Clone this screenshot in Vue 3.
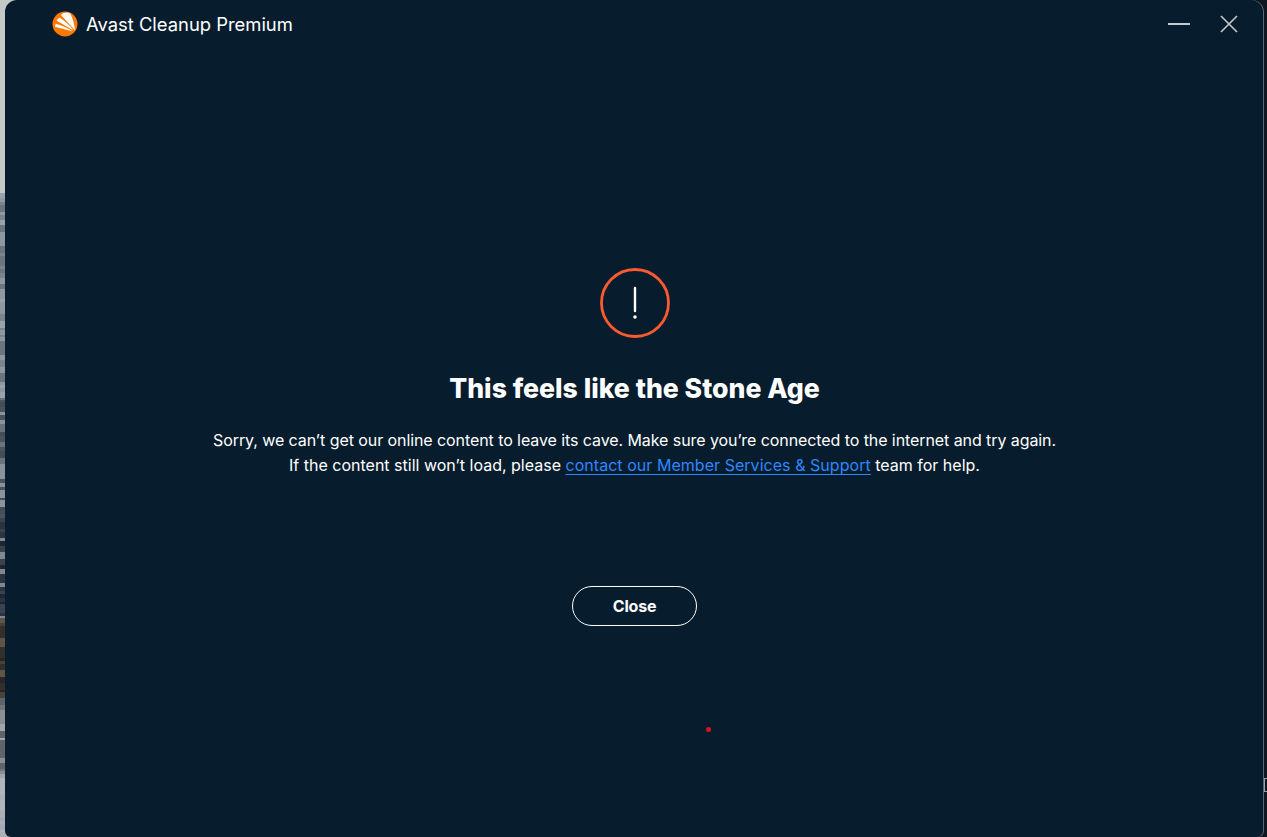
<script setup>
// streaks of the desktop wallpaper showing left of the window
const bands = [
  { h: 205, colors: ["#7b848c", "#8f98a0", "#6c757e", "#9aa2a9"] },
  { h: 120, colors: ["#6a727b", "#4b535e", "#8a929a", "#444c58"] },
  { h: 100, colors: ["#2c3340", "#1f2631", "#80878e", "#3a4250"] },
  { h: 80, colors: ["#4a4339", "#332f2a", "#5e5548", "#262628"] },
  { h: 80, colors: ["#8a8f93", "#5f646b", "#a0a6ab", "#70757b"] },
  { h: 59, colors: ["#a9b0b6", "#a3aab1", "#afb5ba"] },
];

let seed = 7;
const next = () => {
  seed = (seed * 137 + 59) % 1009;
  return seed;
};

const strips = [];
for (const band of bands) {
  let left = band.h;
  while (left > 0) {
    const h = Math.min(left, 2 + (next() % 6));
    strips.push({ c: band.colors[next() % band.colors.length], h });
    left -= h;
  }
}
</script>

<template>
  <div class="desktop">
    <div class="left-strip">
      <div class="top-part"></div>
      <div
        v-for="(s, i) in strips"
        :key="i"
        class="strip"
        :style="{ background: s.c, height: s.h + 'px' }"
      ></div>
    </div>

    <main class="window">
      <header class="titlebar">
        <div class="brand">
          <svg class="logo" viewBox="0 0 26 26" width="26" height="26">
            <circle cx="13" cy="13" r="12.5" fill="#ff7800" />
            <path
              d="M9 4C11 1.6 15.5 1 18 2.2C20.5 6 22.4 13 23 19.5C18 13.5 13 8.5 9 4Z"
              fill="#fff"
            />
            <path
              d="M4.6 9.8C5.6 8 6.8 7 8 6.8C13 10 18 14.5 21.5 19.5C16 16 10 12.8 4.6 9.8Z"
              fill="#fff"
            />
            <path
              d="M3 15.8C3.1 14.5 3.4 13.4 4 12.8C10 14.5 16 17 20.5 20.5C14.5 18.8 9 17.2 3 15.8Z"
              fill="#fff"
            />
          </svg>
          <span class="app-name">Avast Cleanup Premium</span>
        </div>
        <div class="win-controls">
          <span class="minimize"></span>
          <svg class="close-x" viewBox="0 0 18 18" width="18" height="18">
            <path d="M1 1L17 17M17 1L1 17" stroke="#c4cbd0" stroke-width="1.6" fill="none" />
          </svg>
        </div>
      </header>

      <section class="content">
        <svg class="alert" viewBox="0 0 70 70" width="70" height="70">
          <circle cx="35" cy="35" r="33.5" fill="none" stroke="#ff5a30" stroke-width="2.8" />
          <path d="M35 20V43" stroke="#fff" stroke-width="2.4" stroke-linecap="round" />
          <circle cx="35" cy="49" r="1.8" fill="#fff" />
        </svg>
        <h1>This feels like the Stone Age</h1>
        <p>
          <span class="first-line">Sorry, we can’t get our online content to leave its cave. Make sure you’re connected to the internet and try again.</span><br />
          If the content still won’t load, please
          <a href="#">contact our Member Services &amp; Support</a>
          team for help.
        </p>
        <button class="close-btn">Close</button>
      </section>
      <span class="red-dot"></span>
    </main>

    <div class="right-strip">
      <span class="sliver"></span>
    </div>
  </div>
</template>

<style scoped>
.desktop {
  width: 1267px;
  height: 837px;
  display: flex;
  overflow: hidden;
  background: #0f1620;
  font-family: Inter, "Liberation Sans", sans-serif;
}

.left-strip {
  width: 17px;
  flex: none;
  display: flex;
  flex-direction: column;
  background: #c3c9c6;
}

.top-part {
  height: 193px;
  flex: none;
  background: #c3c9c6;
}

.strip {
  flex: none;
}

.window {
  position: relative;
  width: 1259px;
  height: 837px;
  margin-left: -12px;
  box-sizing: border-box;
  flex: none;
  display: flex;
  flex-direction: column;
  background: #071d2d;
  box-shadow: inset -1px 0 0 #5a6670;
  border-radius: 12px 12px 6px 6px;
}

.titlebar {
  height: 48px;
  flex: none;
  display: flex;
  align-items: center;
  justify-content: space-between;
  padding: 0 26px 0 47px;
}

.brand {
  display: flex;
  align-items: center;
  gap: 8px;
}

.app-name {
  color: #fff;
  font-size: 18.4px;
}

.win-controls {
  display: flex;
  align-items: center;
  gap: 30px;
}

.minimize {
  display: block;
  width: 22px;
  height: 2px;
  background: #c4cbd0;
}

.content {
  display: flex;
  flex-direction: column;
  align-items: center;
  padding-top: 220px;
}

h1 {
  margin: 32px 0 0;
  color: #fff;
  font-size: 26.6px;
  line-height: 36px;
  font-weight: 800;
}

p {
  margin: 22px 0 0;
  color: #fff;
  font-size: 16px;
  line-height: 25px;
  text-align: center;
}

.first-line {
  letter-spacing: -0.08px;
}

a {
  color: #2f86ff;
  letter-spacing: 0.04px;
  text-underline-offset: 3px;
  text-decoration-thickness: 1px;
}

.close-btn {
  margin-top: 108px;
  width: 125px;
  height: 40px;
  border: 1px solid #fff;
  border-radius: 20px;
  background: transparent;
  color: #fff;
  font: 700 16px Inter, "Liberation Sans", sans-serif;
  letter-spacing: -0.2px;
}

.red-dot {
  position: absolute;
  left: 701px;
  top: 727px;
  width: 5px;
  height: 5px;
  border-radius: 50%;
  background: #e01020;
}

.right-strip {
  flex: 1;
  position: relative;
  background: #0f1620;
}

.sliver {
  position: absolute;
  left: 0;
  top: 778px;
  width: 3px;
  height: 14px;
  border: 1px solid #9aa3aa;
  border-right: 0;
  box-sizing: border-box;
}
</style>
